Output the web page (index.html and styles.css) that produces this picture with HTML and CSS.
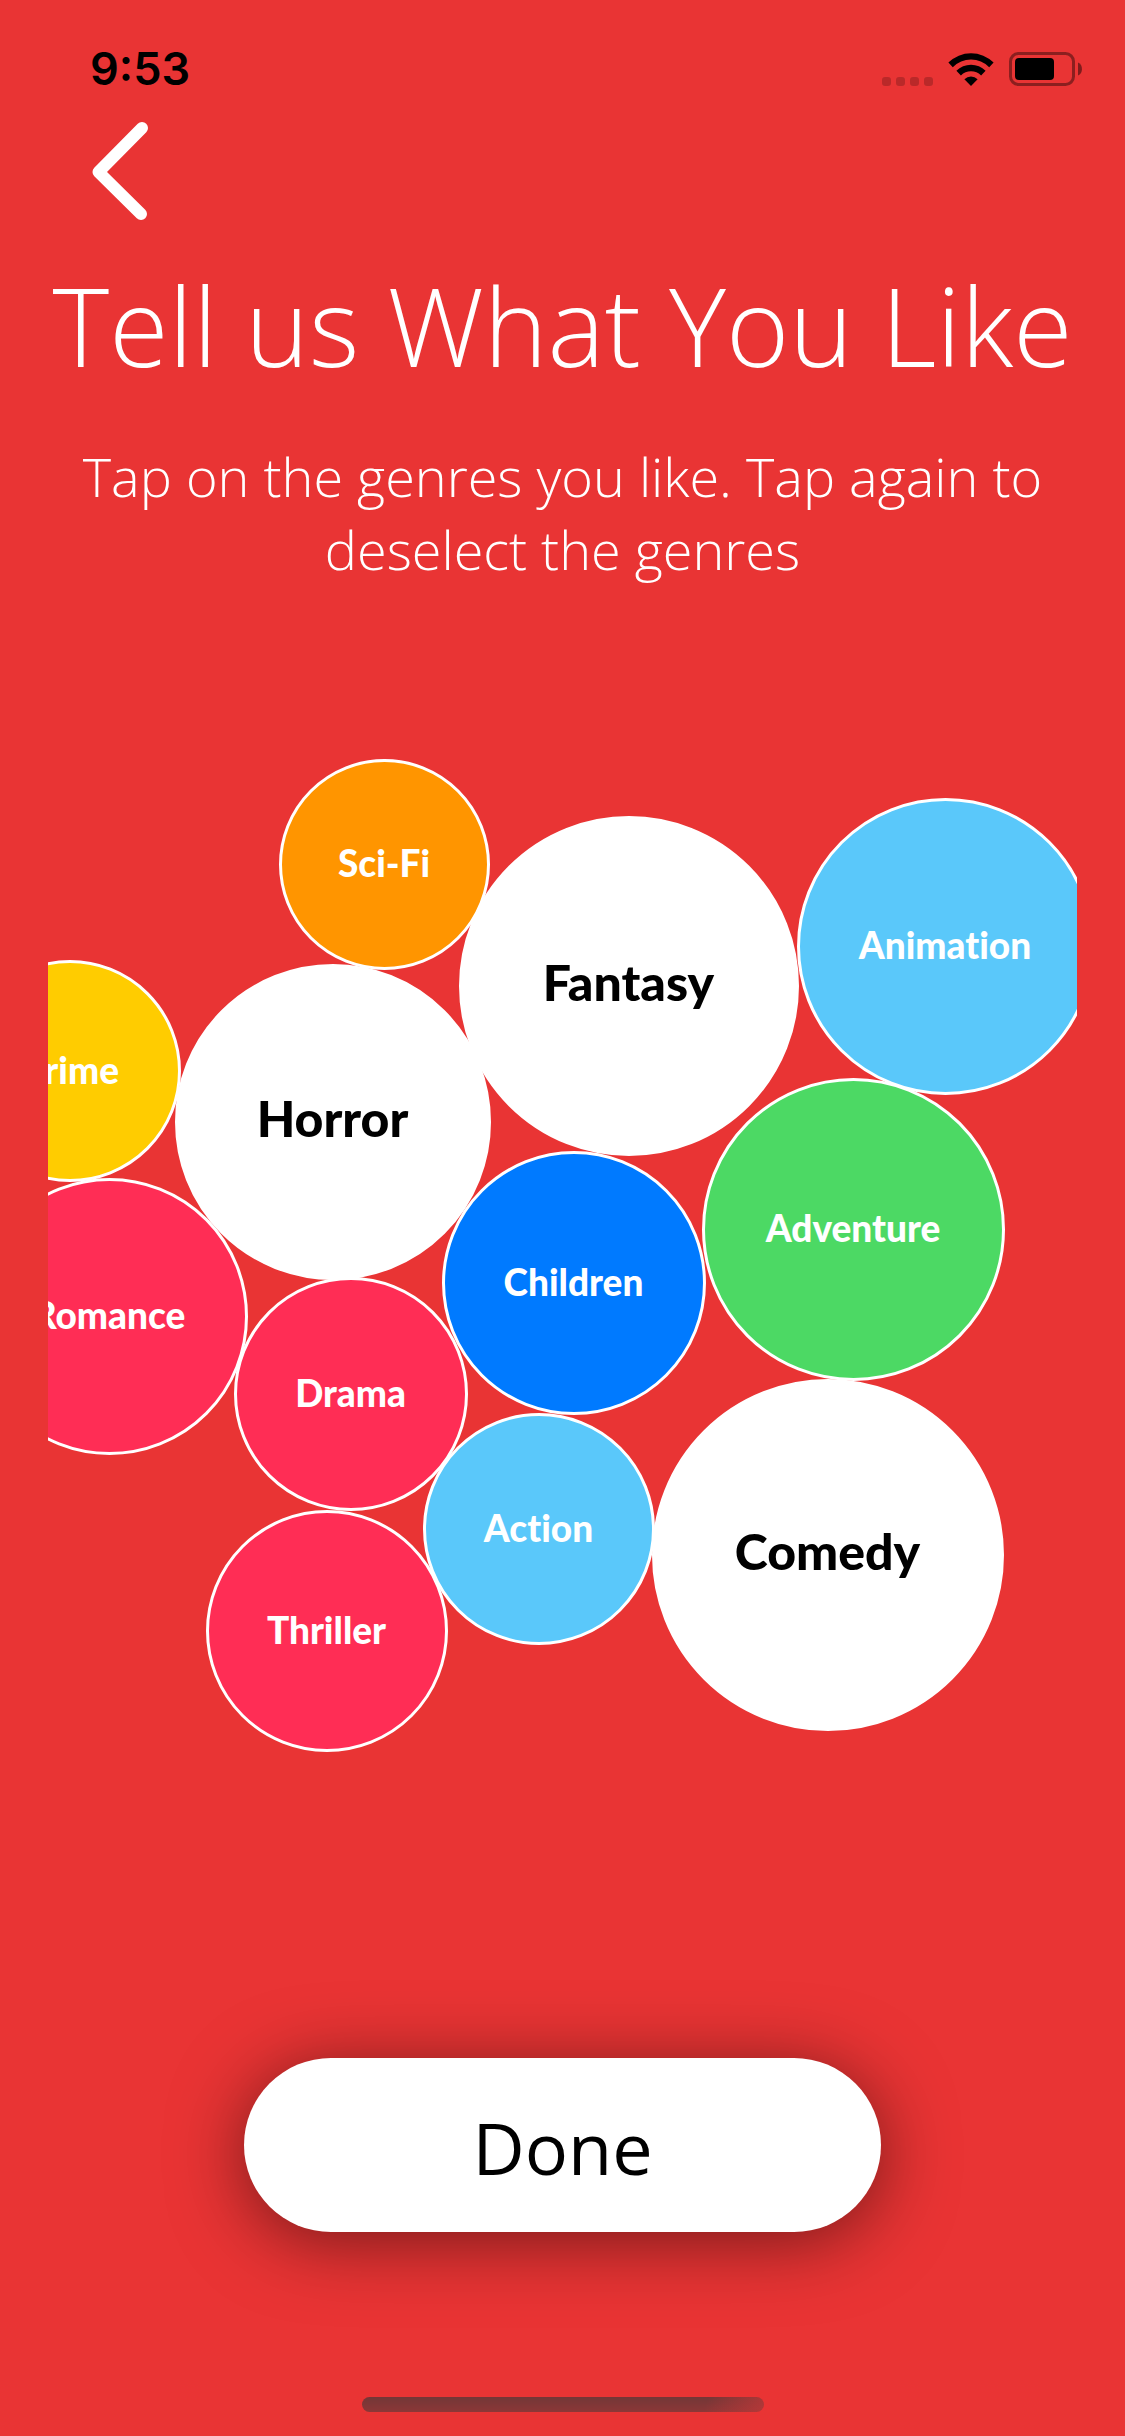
FILE: index.html
```html
<!DOCTYPE html>
<html lang="en">
<head>
  <meta charset="utf-8">
  <meta name="viewport" content="width=device-width, initial-scale=1">
  <title>Tell us What You Like</title>
  <link rel="stylesheet" href="styles.css">
</head>
<body>
  <div class="screen">
    <header class="status-bar">
      <time class="clock">9:53</time>
      <div class="indicators">
        <svg class="signal" width="51" height="33" viewBox="0 0 51 33" aria-hidden="true">
          <g fill="#000" fill-opacity=".2">
            <rect x="0" y="24" width="9" height="9" rx="3"/>
            <rect x="14" y="24" width="9" height="9" rx="3"/>
            <rect x="28" y="24" width="9" height="9" rx="3"/>
            <rect x="42" y="24" width="9" height="9" rx="3"/>
          </g>
        </svg>
        <svg class="wifi" width="46" height="33" viewBox="0 0 46 33" aria-hidden="true">
          <path d="M0.4 9.6 A32 32 0 0 1 45.6 9.6 L41.2 14.2 A25.6 25.6 0 0 0 4.8 14.2 Z"/>
          <path d="M8.4 17.8 A20.8 20.8 0 0 1 37.6 17.8 L33.1 22.4 A14.4 14.4 0 0 0 12.9 22.4 Z"/>
          <path d="M16.4 26.2 A9.4 9.4 0 0 1 29.6 26.2 L23 33 Z"/>
        </svg>
        <svg class="battery" width="74" height="34" viewBox="0 0 74 34" aria-hidden="true">
          <rect x="1.5" y="1.5" width="63" height="31" rx="8" fill="none" stroke="#000" stroke-opacity=".4" stroke-width="3"/>
          <rect x="6" y="6" width="39" height="22" rx="4"/>
          <path d="M69 10.5 C74.3 12.5 74.3 21.5 69 23.5 Z" fill-opacity=".45"/>
        </svg>
      </div>
    </header>

    <nav class="nav">
      <button class="back" type="button" aria-label="Back">
        <svg width="56" height="98" viewBox="0 0 56 98" aria-hidden="true">
          <path d="M50 6 L6.5 50 L49 92" fill="none" stroke="#fff" stroke-width="12" stroke-linecap="round" stroke-linejoin="round"/>
        </svg>
      </button>
    </nav>

    <main class="content">
      <h1 class="title">Tell us What You Like</h1>
      <p class="hint">Tap on the genres you like. Tap again to deselect the genres</p>

      <div class="genres" role="group" aria-label="Genres">
        <button type="button" class="bubble scifi" aria-pressed="false">Sci-Fi</button>
        <button type="button" class="bubble fantasy" aria-pressed="true">Fantasy</button>
        <button type="button" class="bubble animation" aria-pressed="false">Animation</button>
        <button type="button" class="bubble horror" aria-pressed="true">Horror</button>
        <button type="button" class="bubble crime" aria-pressed="false">Crime</button>
        <button type="button" class="bubble romance" aria-pressed="false">Romance</button>
        <button type="button" class="bubble comedy" aria-pressed="true">Comedy</button>
        <button type="button" class="bubble adventure" aria-pressed="false">Adventure</button>
        <button type="button" class="bubble children" aria-pressed="false">Children</button>
        <button type="button" class="bubble drama" aria-pressed="false">Drama</button>
        <button type="button" class="bubble action" aria-pressed="false">Action</button>
        <button type="button" class="bubble thriller" aria-pressed="false">Thriller</button>
      </div>
    </main>

    <footer class="footer">
      <button class="done" type="button">Done</button>
      <div class="home-indicator"></div>
    </footer>
  </div>
</body>
</html>
```
FILE: styles.css
```css
* {
  box-sizing: border-box;
}

body {
  margin: 0;
  background: #e93434;
  color: #fff;
  font-family: "Open Sans", "Noto Sans", sans-serif;
}

button {
  margin: 0;
  padding: 0;
  border: 0;
  background: none;
  color: inherit;
  font: inherit;
  cursor: pointer;
}

svg {
  display: block;
}

.screen {
  display: flex;
  flex-direction: column;
  min-height: 100vh;
  overflow: hidden;
}

/* Status bar */
.status-bar {
  display: flex;
  justify-content: space-between;
  align-items: center;
  padding: 40px 42px 0 90px;
  color: #000;
}

.clock {
  font: 600 45px/58px Inter, "Liberation Sans", sans-serif;
}

.indicators {
  display: flex;
  align-items: center;
  gap: 15px;
}

/* Navigation */
.nav {
  padding: 24px 92px 0;
}

.back {
  display: block;
}

/* Heading and genre picker */
.content {
  padding: 32px 48px 0;
  text-align: center;
}

.title {
  margin: 0 -48px;
  font-size: 108px;
  font-weight: 300;
  line-height: 148px;
}

.hint {
  margin: 40px 0 0;
  font-size: 54px;
  font-weight: 300;
  line-height: 73px;
}

.genres {
  position: relative;
  height: 1040px;
  margin-top: 154px;
  overflow: hidden;
}

/* Each bubble is placed from the centre line of the picker */
.bubble {
  position: absolute;
  left: calc(50% + var(--x));
  top: var(--y);
  width: var(--size);
  height: var(--size);
  padding-bottom: 3px;
  border: 3px solid #fff;
  border-radius: 50%;
  font: 900 37px/48px Lato, "Open Sans", sans-serif;
  font-variant-ligatures: none;
}

.bubble[aria-pressed="true"] {
  padding-bottom: 8px;
  background: #fff;
  color: #000;
  font-size: 50px;
}

.scifi {
  --x: -284px;
  --y: 19px;
  --size: 211px;
  background: #ff9500;
}

.fantasy {
  --x: -104px;
  --y: 76px;
  --size: 340px;
}

.animation {
  --x: 234px;
  --y: 58px;
  --size: 297px;
  background: #5ac8fa;
}

.horror {
  --x: -388px;
  --y: 224px;
  --size: 316px;
}

.crime {
  --x: -604px;
  --y: 220px;
  --size: 222px;
  background: #ffcc00;
}

.romance {
  --x: -592px;
  --y: 438px;
  --size: 277px;
  background: #ff2d55;
}

.comedy {
  --x: 89px;
  --y: 639px;
  --size: 352px;
}

.adventure {
  --x: 139px;
  --y: 338px;
  --size: 303px;
  background: #4cd964;
}

.children {
  --x: -121px;
  --y: 411px;
  --size: 264px;
  background: #007aff;
}

.drama {
  --x: -329px;
  --y: 537px;
  --size: 234px;
  background: #ff2d55;
}

.action {
  --x: -140px;
  --y: 673px;
  --size: 232px;
  background: #5ac8fa;
}

.thriller {
  --x: -357px;
  --y: 770px;
  --size: 242px;
  background: #ff2d55;
}

/* Footer */
.footer {
  display: flex;
  flex-direction: column;
  align-items: center;
  gap: 165px;
  margin-top: auto;
  padding: 24px 48px;
}

.done {
  width: 62%;
  min-width: 320px;
  height: 174px;
  padding-top: 3px;
  border-radius: 87px;
  background: #fff;
  box-shadow: 0 9px 72px rgba(0, 0, 0, .5);
  color: #000;
  font-size: 72px;
  line-height: 98px;
}

.home-indicator {
  width: 402px;
  height: 15px;
  border-radius: 8px;
  background:
    linear-gradient(110deg, transparent 85%, rgba(190, 56, 56, .8) 100%),
    linear-gradient(#733737, #8c3737);
}
```
